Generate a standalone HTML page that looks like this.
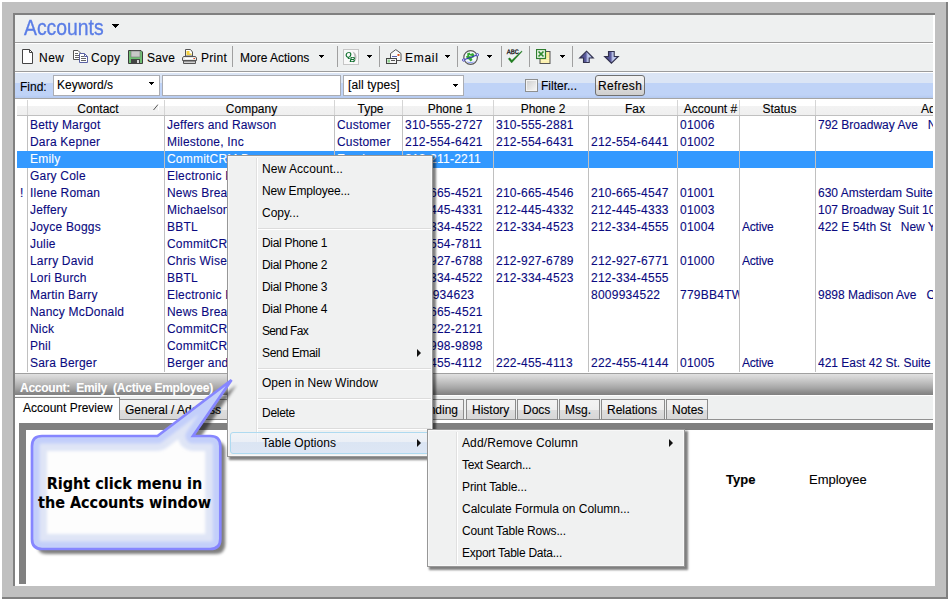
<!DOCTYPE html>
<html><head><meta charset="utf-8"><title>Accounts</title>
<style>
*{box-sizing:border-box;margin:0;padding:0}
html,body{width:948px;height:599px;overflow:hidden;background:#fff}
body{position:relative;font-family:"Liberation Sans",Arial,sans-serif;font-size:12px;color:#000}
.a,.a>*{position:absolute}
.frame{left:2px;top:2px;width:946px;height:597px;background:#c0c0c0;border-right:2px solid #808080;border-bottom:2px solid #808080}
.sunk{left:13px;top:13px;width:922px;height:573px;background:#fff;border-left:2px solid #808080;border-top:2px solid #808080}
.t{white-space:nowrap;line-height:14px;height:14px;-webkit-text-stroke:0.1px}
.ttl{left:24px;top:16px;font-size:22px;transform:scaleX(0.88);transform-origin:0 0;-webkit-text-stroke:0.35px #5a7de6;color:#5a7de6;line-height:24px;height:24px}
.dd{width:5px;height:3px}
.sep{width:1px;height:21px;top:46px;background:#a0a0a0}
.inp{top:75px;height:21px;background:#fff;border:1px solid #abadb3}
.nv{color:#0a0a80}
</style></head><body>
<div class="a frame"></div>
<div class="a sunk"></div>
<div class="a" id="main" style="left:0;top:0;width:933px;height:584px;overflow:hidden">
<div style="left:15px;top:15px;width:918px;height:27px;background:#eef0f0"></div>
<div class="t ttl">Accounts</div>
<svg class="dd" style="left:112px;top:24px;width:7px;height:4px" width="7" height="4" shape-rendering="crispEdges" fill="#000"><rect x="0" y="0" width="7" height="1"/><rect x="1" y="1" width="5" height="1"/><rect x="2" y="2" width="3" height="1"/><rect x="3" y="3" width="1" height="1"/></svg>
<div style="left:15px;top:42px;width:918px;height:1px;background:#9c9c9c"></div>
<div style="left:15px;top:44px;width:918px;height:27px;background:#eef0f0"></div>
<div style="left:15px;top:71px;width:918px;height:1px;background:#9c9c9c"></div>
<div class="t" style="left:39px;top:51px;letter-spacing:0.5px">New</div>
<div class="t" style="left:91px;top:51px;letter-spacing:0.3px">Copy</div>
<div class="t" style="left:147px;top:51px;letter-spacing:0.2px">Save</div>
<div class="t" style="left:201px;top:51px;letter-spacing:0.3px">Print</div>
<div class="t" style="left:240px;top:51px;letter-spacing:0px">More Actions</div>
<div class="t" style="left:405px;top:51px;letter-spacing:0.7px">Email</div>
<div class="sep" style="left:232px"></div>
<div class="sep" style="left:337px"></div>
<div class="sep" style="left:379px"></div>
<div class="sep" style="left:457px"></div>
<div class="sep" style="left:501px"></div>
<div class="sep" style="left:529px"></div>
<div class="sep" style="left:572px"></div>
<svg class="dd" style="left:319px;top:55px;width:5px;height:3px" width="5" height="3" shape-rendering="crispEdges" fill="#000"><rect x="0" y="0" width="5" height="1"/><rect x="1" y="1" width="3" height="1"/><rect x="2" y="2" width="1" height="1"/></svg>
<svg class="dd" style="left:367px;top:55px;width:5px;height:3px" width="5" height="3" shape-rendering="crispEdges" fill="#000"><rect x="0" y="0" width="5" height="1"/><rect x="1" y="1" width="3" height="1"/><rect x="2" y="2" width="1" height="1"/></svg>
<svg class="dd" style="left:445px;top:55px;width:5px;height:3px" width="5" height="3" shape-rendering="crispEdges" fill="#000"><rect x="0" y="0" width="5" height="1"/><rect x="1" y="1" width="3" height="1"/><rect x="2" y="2" width="1" height="1"/></svg>
<svg class="dd" style="left:487px;top:55px;width:5px;height:3px" width="5" height="3" shape-rendering="crispEdges" fill="#000"><rect x="0" y="0" width="5" height="1"/><rect x="1" y="1" width="3" height="1"/><rect x="2" y="2" width="1" height="1"/></svg>
<svg class="dd" style="left:560px;top:55px;width:5px;height:3px" width="5" height="3" shape-rendering="crispEdges" fill="#000"><rect x="0" y="0" width="5" height="1"/><rect x="1" y="1" width="3" height="1"/><rect x="2" y="2" width="1" height="1"/></svg>
<svg style="left:22px;top:49px" width="12" height="15" viewBox="0 0 12 15" ><path d="M0.5 0.5H7.5L10.5 3.5V14.5H0.5Z" fill="#fff" stroke="#444" stroke-width="1"/><path d="M7.5 0.5V3.5H10.5" fill="none" stroke="#444" stroke-width="1"/></svg>
<svg style="left:73px;top:50px" width="16" height="13" viewBox="0 0 16 13" ><path d="M0.5 0.5H5L7.5 3V9.5H0.5Z" fill="#fff" stroke="#555" stroke-width="1"/><path d="M2 3.5H5M2 5.5H6M2 7.5H6" stroke="#666" stroke-width="1"/><path d="M6.5 3.5H11.5L14.5 6.5V12.5H6.5Z" fill="#fff" stroke="#5a62a4" stroke-width="1"/><path d="M11.5 3.5V6.5H14.5" fill="none" stroke="#5a62a4" stroke-width="1"/><path d="M8 6.5H11M8 8.5H13M8 10.5H13" stroke="#666" stroke-width="1"/></svg>
<svg style="left:128px;top:50px" width="15" height="14" viewBox="0 0 15 14" ><path d="M0.5 0.5H13L14.5 2V13.5H0.5Z" fill="#6fbf73" stroke="#3c3c3c" stroke-width="1"/><rect x="3" y="1" width="9" height="6" fill="#c8c8c8" stroke="#777" stroke-width="0.6"/><rect x="3" y="9" width="9" height="5" fill="#444"/><rect x="9" y="10" width="2" height="3" fill="#d8d8d8"/></svg>
<svg style="left:182px;top:49px" width="15" height="15" viewBox="0 0 15 15" ><path d="M3.5 0.5H8.5L10.5 3V7H3.5Z" fill="#fff" stroke="#555" stroke-width="1"/><path d="M4.5 2H7.5V4.5H9.5V6H4.5Z" fill="#f2d040"/><path d="M1.5 7.5H13.5L14.5 9V11.5H0.5V9Z" fill="#e8e8e8" stroke="#555" stroke-width="1"/><path d="M3 9.5H11" stroke="#fff" stroke-width="1"/><rect x="11.5" y="9" width="1.5" height="1" fill="#e04a20"/><path d="M1.5 12H13.5V14.5H1.5Z" fill="#d0d0d0" stroke="#555" stroke-width="1"/></svg>
<svg style="left:343px;top:49px" width="16" height="16" viewBox="0 0 16 16" ><rect x="0.5" y="0.5" width="15" height="15" fill="#f9f9f9" stroke="#c6c6c6"/><path d="M9.5 2.5C14.5 4 15 11 10 14C11.5 11.5 12.5 6.5 9.5 2.5Z" fill="#b9b9b9"/><g style="opacity:.99"><text x="2.2" y="8.2" font-family="Liberation Sans,Arial,sans-serif" font-size="8" font-weight="bold" font-style="italic" fill="#0b6e2b">Q</text><text x="6.6" y="12.8" font-family="Liberation Sans,Arial,sans-serif" font-size="8" font-weight="bold" font-style="italic" fill="#0b6e2b">B</text></g></svg>
<svg style="left:386px;top:49px" width="16" height="15" viewBox="0 0 16 15" ><path d="M4.5 11.5V4.5L9.8 0.6L15 4.5V11.5Z" fill="#fbfbfb" stroke="#555" stroke-width="1"/><path d="M6 7.5H11" stroke="#5a62b0" stroke-width="1"/><rect x="11.5" y="5" width="2" height="2" fill="#e0581c"/><rect x="0.5" y="9.5" width="10" height="5" fill="#f4f4f4" stroke="#444" stroke-width="1"/><rect x="1.5" y="10.5" width="2.5" height="3" fill="#8fd08f"/><path d="M5 11.5H9" stroke="#555" stroke-width="1"/></svg>
<svg style="left:462px;top:50px" width="17" height="15" viewBox="0 0 17 15" ><circle cx="8.6" cy="7.5" r="6.8" fill="#f6fafc" stroke="#5a5a5a" stroke-width="1.2"/><path d="M5 3.5L7.5 2.5L8.5 4L11 3L12.5 5L11.5 7.5L9.5 8L10.5 10L8.5 11.5L7 9.5L5 9L4 6.5L5.5 5.5Z" fill="#36a836"/><path d="M7 5.5L10 6.5" stroke="#f6fafc" stroke-width="0.9"/><path d="M4 11.2C6.3 13.8 10.8 13.8 13.2 11.2C10.5 12.2 6.5 12.2 4 11.2Z" fill="#8e9ff0"/><path d="M2 9.8L15.2 5" stroke="#3838b4" stroke-width="1.1"/><circle cx="1.7" cy="10" r="1.2" fill="#fff" stroke="#3838b4" stroke-width="0.9"/><circle cx="15.4" cy="4.8" r="1.2" fill="#fff" stroke="#3838b4" stroke-width="0.9"/></svg>
<svg style="left:506px;top:48px" width="18" height="17" viewBox="0 0 18 17" ><text x="0.8" y="6.4" font-family="Liberation Mono,monospace" font-size="6.8" fill="#111" stroke="#111" stroke-width="0.25" letter-spacing="-0.1" text-rendering="geometricPrecision">ABC</text><path d="M2.2 10.8L5.6 15L16.2 3.6L15.6 3.1L5.8 12.2L3.8 9.8Z" fill="#1f7f1f" stroke="#176a17" stroke-width="0.3"/></svg>
<svg style="left:536px;top:49px" width="15" height="15" viewBox="0 0 15 15" ><rect x="4" y="2.5" width="10" height="12" fill="#fbeea0" stroke="#555" stroke-width="1"/><path d="M5 9.5H13M5 11.5H13M5 13H13" stroke="#fff6c8" stroke-width="0.8"/><rect x="0.5" y="0.5" width="9" height="9" fill="#e9f4e6" stroke="#2e7d2e" stroke-width="1.2"/><path d="M2.5 2.5L7.5 7.5M7.5 2.5L2.5 7.5" stroke="#2e8a2e" stroke-width="1.7"/></svg>
<svg style="left:578px;top:50px" width="17" height="14" viewBox="0 0 17 14" ><defs><linearGradient id="ag" x1="0" x2="1" y1="0" y2="0"><stop offset="0" stop-color="#40407c"/><stop offset=".45" stop-color="#5c5c9e"/><stop offset=".6" stop-color="#c4cef0"/><stop offset=".8" stop-color="#b4c0ea"/><stop offset="1" stop-color="#50508c"/></linearGradient></defs><path d="M8.5 1.2L15.3 8H11.2V12.5H5.5V8H1.7Z" fill="url(#ag)" stroke="#32324e" stroke-width="1.1" stroke-linejoin="miter"/></svg>
<svg style="left:603px;top:50px" width="17" height="14" viewBox="0 0 17 14" ><path d="M5.5 1.5H11.2V6.5H15.3L8.4 13.2L1.6 6.5H5.5Z" fill="url(#ag)" stroke="#32324e" stroke-width="1.1" stroke-linejoin="miter"/></svg>
<div style="left:15px;top:73px;width:918px;height:25px;background:linear-gradient(#dbe5f5 0,#dbe5f5 10px,#bfd3f7 10px,#bfd3f7 22px,#b4c9ef 25px)"></div>
<div style="left:15px;top:98px;width:918px;height:1px;background:#a5a5a5"></div>
<div class="t" style="left:20px;top:80px">Find:</div>
<div class="inp" style="left:53px;width:107px"></div><div class="t" style="left:57px;top:78px">Keyword/s</div><svg class="dd" style="left:149px;top:82px;width:5px;height:3px" width="5" height="3" shape-rendering="crispEdges" fill="#000"><rect x="0" y="0" width="5" height="1"/><rect x="1" y="1" width="3" height="1"/><rect x="2" y="2" width="1" height="1"/></svg>
<div class="inp" style="left:162px;width:179px"></div>
<div class="inp" style="left:343px;width:121px"></div><div class="t" style="left:348px;top:78px;letter-spacing:0.1px">[all types]</div><svg class="dd" style="left:453px;top:84px;width:5px;height:3px" width="5" height="3" shape-rendering="crispEdges" fill="#000"><rect x="0" y="0" width="5" height="1"/><rect x="1" y="1" width="3" height="1"/><rect x="2" y="2" width="1" height="1"/></svg>
<div style="left:525px;top:79px;width:13px;height:13px;border:1px solid #8e8f8f;box-shadow:inset 0 0 0 1px #f4f4f4;background:linear-gradient(135deg,#cdcdcd,#f8f8f8)"></div>
<div class="t" style="left:541px;top:79px">Filter...</div>
<div style="left:595px;top:75px;width:50px;height:21px;border:1px solid #707070;border-radius:3px;background:linear-gradient(#f2f2f2,#ebebeb 50%,#dddddd 50%,#cfcfcf)"></div>
<div class="t" style="left:598px;top:79px;letter-spacing:0.3px">Refresh</div>
<div style="left:17px;top:99px;width:916px;height:16px;background:linear-gradient(#fff 0,#fff 7px,#f3f3f3 7px,#efefef 16px)"></div>
<div style="left:17px;top:115px;width:916px;height:1px;background:#c0c0c0"></div>
<div style="left:27px;top:100px;width:1px;height:15px;background:#d5d5d5"></div>
<div style="left:164px;top:100px;width:1px;height:15px;background:#d5d5d5"></div>
<div style="left:334px;top:100px;width:1px;height:15px;background:#d5d5d5"></div>
<div style="left:402px;top:100px;width:1px;height:15px;background:#d5d5d5"></div>
<div style="left:493px;top:100px;width:1px;height:15px;background:#d5d5d5"></div>
<div style="left:588px;top:100px;width:1px;height:15px;background:#d5d5d5"></div>
<div style="left:677px;top:100px;width:1px;height:15px;background:#d5d5d5"></div>
<div style="left:739px;top:100px;width:1px;height:15px;background:#d5d5d5"></div>
<div style="left:815px;top:100px;width:1px;height:15px;background:#d5d5d5"></div>
<div style="left:27px;top:116px;width:1px;height:256px;background:#c0c0c0"></div>
<div style="left:164px;top:116px;width:1px;height:256px;background:#c0c0c0"></div>
<div style="left:334px;top:116px;width:1px;height:256px;background:#c0c0c0"></div>
<div style="left:402px;top:116px;width:1px;height:256px;background:#c0c0c0"></div>
<div style="left:493px;top:116px;width:1px;height:256px;background:#c0c0c0"></div>
<div style="left:588px;top:116px;width:1px;height:256px;background:#c0c0c0"></div>
<div style="left:677px;top:116px;width:1px;height:256px;background:#c0c0c0"></div>
<div style="left:739px;top:116px;width:1px;height:256px;background:#c0c0c0"></div>
<div style="left:815px;top:116px;width:1px;height:256px;background:#c0c0c0"></div>
<div class="t" style="left:29px;top:102px;width:138px;text-align:center">Contact</div>
<div class="t" style="left:166px;top:102px;width:171px;text-align:center">Company</div>
<div class="t" style="left:336px;top:102px;width:69px;text-align:center">Type</div>
<div class="t" style="left:404px;top:102px;width:92px;text-align:center">Phone 1</div>
<div class="t" style="left:495px;top:102px;width:96px;text-align:center">Phone 2</div>
<div class="t" style="left:590px;top:102px;width:90px;text-align:center">Fax</div>
<div class="t" style="left:679px;top:102px;width:63px;text-align:center">Account #</div>
<div class="t" style="left:741px;top:102px;width:77px;text-align:center">Status</div>
<div class="t" style="left:921px;top:102px">Address</div>
<svg style="left:152px;top:103px" width="8" height="8" viewBox="0 0 8 8"><path d="M1.5 7 L6 1.5" stroke="#555" stroke-width="1" fill="none"/><path d="M6.5 1.5V7.5" stroke="#fff" stroke-width="1"/></svg>
<div style="left:17px;top:151px;width:916px;height:17px;background:#3399ff"></div>
<div style="left:164px;top:151px;width:1px;height:17px;background:#c0c0c0"></div>
<div style="left:334px;top:151px;width:1px;height:17px;background:#c0c0c0"></div>
<div style="left:402px;top:151px;width:1px;height:17px;background:#c0c0c0"></div>
<div style="left:493px;top:151px;width:1px;height:17px;background:#c0c0c0"></div>
<div style="left:588px;top:151px;width:1px;height:17px;background:#c0c0c0"></div>
<div style="left:677px;top:151px;width:1px;height:17px;background:#c0c0c0"></div>
<div style="left:739px;top:151px;width:1px;height:17px;background:#c0c0c0"></div>
<div style="left:815px;top:151px;width:1px;height:17px;background:#c0c0c0"></div>
<div class="t nv" style="left:30px;top:118px;width:134px;overflow:hidden;letter-spacing:0.2px">Betty Margot</div>
<div class="t nv" style="left:167px;top:118px;width:167px;overflow:hidden;letter-spacing:0.2px">Jeffers and Rawson</div>
<div class="t nv" style="left:337px;top:118px;width:65px;overflow:hidden;letter-spacing:0.2px">Customer</div>
<div class="t nv" style="left:405px;top:118px;width:88px;overflow:hidden;letter-spacing:0.25px">310-555-2727</div>
<div class="t nv" style="left:496px;top:118px;width:92px;overflow:hidden;letter-spacing:0.25px">310-555-2881</div>
<div class="t nv" style="left:680px;top:118px;width:59px;overflow:hidden;letter-spacing:0.25px">01006</div>
<div class="t nv" style="left:818px;top:118px;width:115px;overflow:hidden">792 Broadway Ave &nbsp; New</div>
<div class="t nv" style="left:30px;top:135px;width:134px;overflow:hidden;letter-spacing:0.2px">Dara Kepner</div>
<div class="t nv" style="left:167px;top:135px;width:167px;overflow:hidden;letter-spacing:0.2px">Milestone, Inc</div>
<div class="t nv" style="left:337px;top:135px;width:65px;overflow:hidden;letter-spacing:0.2px">Customer</div>
<div class="t nv" style="left:405px;top:135px;width:88px;overflow:hidden;letter-spacing:0.25px">212-554-6421</div>
<div class="t nv" style="left:496px;top:135px;width:92px;overflow:hidden;letter-spacing:0.25px">212-554-6431</div>
<div class="t nv" style="left:591px;top:135px;width:86px;overflow:hidden;letter-spacing:0.25px">212-554-6441</div>
<div class="t nv" style="left:680px;top:135px;width:59px;overflow:hidden;letter-spacing:0.25px">01002</div>
<div class="t" style="left:30px;top:152px;width:134px;overflow:hidden;color:#fff;letter-spacing:0.2px">Emily</div>
<div class="t" style="left:167px;top:152px;width:167px;overflow:hidden;color:#fff;letter-spacing:0.2px">CommitCRM D</div>
<div class="t" style="left:337px;top:152px;width:65px;overflow:hidden;color:#fff;letter-spacing:0.2px">Employee</div>
<div class="t" style="left:405px;top:152px;width:88px;overflow:hidden;color:#fff;letter-spacing:0.25px">212-211-2211</div>
<div class="t nv" style="left:30px;top:169px;width:134px;overflow:hidden;letter-spacing:0.2px">Gary Cole</div>
<div class="t nv" style="left:167px;top:169px;width:167px;overflow:hidden;letter-spacing:0.2px">Electronic P</div>
<div class="t nv" style="left:30px;top:186px;width:134px;overflow:hidden;letter-spacing:0.2px">Ilene Roman</div>
<div class="t nv" style="left:167px;top:186px;width:167px;overflow:hidden;letter-spacing:0.2px">News Break</div>
<div class="t nv" style="left:405px;top:186px;width:88px;overflow:hidden;letter-spacing:0.25px">210-665-4521</div>
<div class="t nv" style="left:496px;top:186px;width:92px;overflow:hidden;letter-spacing:0.25px">210-665-4546</div>
<div class="t nv" style="left:591px;top:186px;width:86px;overflow:hidden;letter-spacing:0.25px">210-665-4547</div>
<div class="t nv" style="left:680px;top:186px;width:59px;overflow:hidden;letter-spacing:0.25px">01001</div>
<div class="t nv" style="left:818px;top:186px;width:115px;overflow:hidden">630 Amsterdam Suite 1</div>
<div class="t nv" style="left:30px;top:203px;width:134px;overflow:hidden;letter-spacing:0.2px">Jeffery</div>
<div class="t nv" style="left:167px;top:203px;width:167px;overflow:hidden;letter-spacing:0.2px">Michaelson</div>
<div class="t nv" style="left:405px;top:203px;width:88px;overflow:hidden;letter-spacing:0.25px">212-445-4331</div>
<div class="t nv" style="left:496px;top:203px;width:92px;overflow:hidden;letter-spacing:0.25px">212-445-4332</div>
<div class="t nv" style="left:591px;top:203px;width:86px;overflow:hidden;letter-spacing:0.25px">212-445-4333</div>
<div class="t nv" style="left:680px;top:203px;width:59px;overflow:hidden;letter-spacing:0.25px">01003</div>
<div class="t nv" style="left:818px;top:203px;width:115px;overflow:hidden">107 Broadway Suit 10</div>
<div class="t nv" style="left:30px;top:220px;width:134px;overflow:hidden;letter-spacing:0.2px">Joyce Boggs</div>
<div class="t nv" style="left:167px;top:220px;width:167px;overflow:hidden;letter-spacing:0.2px">BBTL</div>
<div class="t nv" style="left:405px;top:220px;width:88px;overflow:hidden;letter-spacing:0.25px">212-334-4522</div>
<div class="t nv" style="left:496px;top:220px;width:92px;overflow:hidden;letter-spacing:0.25px">212-334-4523</div>
<div class="t nv" style="left:591px;top:220px;width:86px;overflow:hidden;letter-spacing:0.25px">212-334-4555</div>
<div class="t nv" style="left:680px;top:220px;width:59px;overflow:hidden;letter-spacing:0.25px">01004</div>
<div class="t nv" style="left:742px;top:220px;width:73px;overflow:hidden;letter-spacing:-0.2px">Active</div>
<div class="t nv" style="left:818px;top:220px;width:115px;overflow:hidden">422 E 54th St &nbsp; New Y</div>
<div class="t nv" style="left:30px;top:237px;width:134px;overflow:hidden;letter-spacing:0.2px">Julie</div>
<div class="t nv" style="left:167px;top:237px;width:167px;overflow:hidden;letter-spacing:0.2px">CommitCRM</div>
<div class="t nv" style="left:405px;top:237px;width:88px;overflow:hidden;letter-spacing:0.25px">212-554-7811</div>
<div class="t nv" style="left:30px;top:254px;width:134px;overflow:hidden;letter-spacing:0.2px">Larry David</div>
<div class="t nv" style="left:167px;top:254px;width:167px;overflow:hidden;letter-spacing:0.2px">Chris Wise</div>
<div class="t nv" style="left:405px;top:254px;width:88px;overflow:hidden;letter-spacing:0.25px">212-927-6788</div>
<div class="t nv" style="left:496px;top:254px;width:92px;overflow:hidden;letter-spacing:0.25px">212-927-6789</div>
<div class="t nv" style="left:591px;top:254px;width:86px;overflow:hidden;letter-spacing:0.25px">212-927-6771</div>
<div class="t nv" style="left:680px;top:254px;width:59px;overflow:hidden;letter-spacing:0.25px">01000</div>
<div class="t nv" style="left:742px;top:254px;width:73px;overflow:hidden;letter-spacing:-0.2px">Active</div>
<div class="t nv" style="left:30px;top:271px;width:134px;overflow:hidden;letter-spacing:0.2px">Lori Burch</div>
<div class="t nv" style="left:167px;top:271px;width:167px;overflow:hidden;letter-spacing:0.2px">BBTL</div>
<div class="t nv" style="left:405px;top:271px;width:88px;overflow:hidden;letter-spacing:0.25px">212-334-4522</div>
<div class="t nv" style="left:496px;top:271px;width:92px;overflow:hidden;letter-spacing:0.25px">212-334-4523</div>
<div class="t nv" style="left:591px;top:271px;width:86px;overflow:hidden;letter-spacing:0.25px">212-334-4555</div>
<div class="t nv" style="left:30px;top:288px;width:134px;overflow:hidden;letter-spacing:0.2px">Martin Barry</div>
<div class="t nv" style="left:167px;top:288px;width:167px;overflow:hidden;letter-spacing:0.2px">Electronic P</div>
<div class="t nv" style="left:405px;top:288px;width:88px;overflow:hidden;letter-spacing:0.25px">8009934623</div>
<div class="t nv" style="left:591px;top:288px;width:86px;overflow:hidden;letter-spacing:0.25px">8009934522</div>
<div class="t nv" style="left:680px;top:288px;width:59px;overflow:hidden;letter-spacing:0.25px">779BB4TW</div>
<div class="t nv" style="left:818px;top:288px;width:115px;overflow:hidden">9898 Madison Ave &nbsp; Ch</div>
<div class="t nv" style="left:30px;top:305px;width:134px;overflow:hidden;letter-spacing:0.2px">Nancy McDonald</div>
<div class="t nv" style="left:167px;top:305px;width:167px;overflow:hidden;letter-spacing:0.2px">News Break</div>
<div class="t nv" style="left:405px;top:305px;width:88px;overflow:hidden;letter-spacing:0.25px">210-665-4521</div>
<div class="t nv" style="left:30px;top:322px;width:134px;overflow:hidden;letter-spacing:0.2px">Nick</div>
<div class="t nv" style="left:167px;top:322px;width:167px;overflow:hidden;letter-spacing:0.2px">CommitCRM</div>
<div class="t nv" style="left:405px;top:322px;width:88px;overflow:hidden;letter-spacing:0.25px">212-222-2121</div>
<div class="t nv" style="left:30px;top:339px;width:134px;overflow:hidden;letter-spacing:0.2px">Phil</div>
<div class="t nv" style="left:167px;top:339px;width:167px;overflow:hidden;letter-spacing:0.2px">CommitCRM</div>
<div class="t nv" style="left:405px;top:339px;width:88px;overflow:hidden;letter-spacing:0.25px">212-998-9898</div>
<div class="t nv" style="left:30px;top:356px;width:134px;overflow:hidden;letter-spacing:0.2px">Sara Berger</div>
<div class="t nv" style="left:167px;top:356px;width:167px;overflow:hidden;letter-spacing:0.2px">Berger and</div>
<div class="t nv" style="left:405px;top:356px;width:88px;overflow:hidden;letter-spacing:0.25px">222-455-4112</div>
<div class="t nv" style="left:496px;top:356px;width:92px;overflow:hidden;letter-spacing:0.25px">222-455-4113</div>
<div class="t nv" style="left:591px;top:356px;width:86px;overflow:hidden;letter-spacing:0.25px">222-455-4144</div>
<div class="t nv" style="left:680px;top:356px;width:59px;overflow:hidden;letter-spacing:0.25px">01005</div>
<div class="t nv" style="left:742px;top:356px;width:73px;overflow:hidden;letter-spacing:-0.2px">Active</div>
<div class="t nv" style="left:818px;top:356px;width:115px;overflow:hidden">421 East 42 St. Suite 6</div>
<div class="t nv" style="left:20px;top:186px">!</div>
<div style="left:15px;top:373px;width:918px;height:1px;background:#a0a0a0"></div>
<div style="left:15px;top:374px;width:918px;height:21px;background:linear-gradient(#e0e0e0 0,#d2d2d2 4px,#bcbcbc 9px,#a6a6a6 14px,#8e8e8e 18px,#808080 21px)"></div>
<div class="t" style="left:20px;top:381px;color:#fff;font-weight:bold;letter-spacing:-0.25px">Account:&nbsp; Emily&nbsp; (Active Employee)</div>
<div style="left:15px;top:396px;width:918px;height:24px;background:#eef0f0"></div>
<div style="left:15px;top:419px;width:918px;height:1px;background:#919191"></div>
<div style="left:119px;top:399px;width:110px;height:21px;border:1px solid #8c8c8c;background:linear-gradient(#f3f3f3 0,#efefef 10px,#dedede 10px,#d6d6d6 20px)"></div>
<div class="t" style="left:125px;top:403px">General / Address</div>
<div style="left:394px;top:399px;width:70px;height:21px;border:1px solid #8c8c8c;background:linear-gradient(#f3f3f3 0,#efefef 10px,#dedede 10px,#d6d6d6 20px)"></div>
<div class="t" style="left:394px;top:403px;width:64px;text-align:right">Pending</div>
<div style="left:466px;top:399px;width:50px;height:21px;border:1px solid #8c8c8c;background:linear-gradient(#f3f3f3 0,#efefef 10px,#dedede 10px,#d6d6d6 20px)"></div>
<div class="t" style="left:472px;top:403px">History</div>
<div style="left:517px;top:399px;width:41px;height:21px;border:1px solid #8c8c8c;background:linear-gradient(#f3f3f3 0,#efefef 10px,#dedede 10px,#d6d6d6 20px)"></div>
<div class="t" style="left:523px;top:403px">Docs</div>
<div style="left:559px;top:399px;width:41px;height:21px;border:1px solid #8c8c8c;background:linear-gradient(#f3f3f3 0,#efefef 10px,#dedede 10px,#d6d6d6 20px)"></div>
<div class="t" style="left:565px;top:403px">Msg.</div>
<div style="left:601px;top:399px;width:64px;height:21px;border:1px solid #8c8c8c;background:linear-gradient(#f3f3f3 0,#efefef 10px,#dedede 10px,#d6d6d6 20px)"></div>
<div class="t" style="left:607px;top:403px">Relations</div>
<div style="left:666px;top:399px;width:42px;height:21px;border:1px solid #8c8c8c;background:linear-gradient(#f3f3f3 0,#efefef 10px,#dedede 10px,#d6d6d6 20px)"></div>
<div class="t" style="left:672px;top:403px">Notes</div>
<div style="left:15px;top:397px;width:105px;height:23px;border:1px solid #8c8c8c;border-left:none;border-bottom:none;background:#fff"></div>
<div class="t" style="left:23px;top:401px">Account Preview</div>
<div style="left:15px;top:420px;width:918px;height:164px;background:#fff"></div>
<div style="left:19px;top:423px;width:914px;height:7px;background:#808080"></div>
<div style="left:19px;top:423px;width:7px;height:161px;background:#808080"></div>
<div class="t" style="left:726px;top:473px;font-weight:bold;font-size:13px">Type</div>
<div class="t" style="left:809px;top:473px;font-size:13px">Employee</div>
</div>
<div class="a" id="over" style="left:0;top:0;width:948px;height:599px">
<div style="left:227px;top:155px;width:206px;height:302px;background:#f0f1f1;border:1px solid #979797;box-shadow:inset 0 0 0 1px #f8f8f8,2px 2px 2px 0.5px rgba(0,0,0,.5)"></div>
<div style="left:256px;top:158px;width:1px;height:296px;background:#e0e0e0"></div>
<div style="left:257px;top:158px;width:1px;height:296px;background:#fff"></div>
<div class="t" style="left:262px;top:162px;-webkit-text-stroke:0;letter-spacing:0.07px">New Account...</div>
<div class="t" style="left:262px;top:184px;-webkit-text-stroke:0;letter-spacing:-0.18px">New Employee...</div>
<div class="t" style="left:262px;top:206px;-webkit-text-stroke:0">Copy...</div>
<div style="left:258px;top:228px;width:173px;height:1px;background:#dcdcdc"></div>
<div style="left:258px;top:229px;width:173px;height:1px;background:#fff"></div>
<div class="t" style="left:262px;top:236px;-webkit-text-stroke:0;letter-spacing:-0.31px">Dial Phone 1</div>
<div class="t" style="left:262px;top:258px;-webkit-text-stroke:0;letter-spacing:-0.31px">Dial Phone 2</div>
<div class="t" style="left:262px;top:280px;-webkit-text-stroke:0;letter-spacing:-0.31px">Dial Phone 3</div>
<div class="t" style="left:262px;top:302px;-webkit-text-stroke:0;letter-spacing:-0.31px">Dial Phone 4</div>
<div class="t" style="left:262px;top:324px;-webkit-text-stroke:0;letter-spacing:-0.67px">Send Fax</div>
<div class="t" style="left:262px;top:346px;-webkit-text-stroke:0;letter-spacing:-0.34px">Send Email</div>
<div style="left:417px;top:349px;width:0;height:0;border-top:4px solid transparent;border-bottom:4px solid transparent;border-left:4px solid #111"></div>
<div style="left:258px;top:368px;width:173px;height:1px;background:#dcdcdc"></div>
<div style="left:258px;top:369px;width:173px;height:1px;background:#fff"></div>
<div class="t" style="left:262px;top:376px;-webkit-text-stroke:0;letter-spacing:0.03px">Open in New Window</div>
<div style="left:258px;top:398px;width:173px;height:1px;background:#dcdcdc"></div>
<div style="left:258px;top:399px;width:173px;height:1px;background:#fff"></div>
<div class="t" style="left:262px;top:406px;-webkit-text-stroke:0;letter-spacing:-0.28px">Delete</div>
<div style="left:258px;top:428px;width:173px;height:1px;background:#dcdcdc"></div>
<div style="left:258px;top:429px;width:173px;height:1px;background:#fff"></div>
<div style="left:230px;top:432px;width:200px;height:22px;border:1px solid #aedaf0;border-radius:3px;background:linear-gradient(rgba(240,244,250,.6) 0,rgba(232,238,248,.7) 9px,#dbe5f3 9px,#dde6f4 20px)"></div>
<div class="t" style="left:262px;top:436px;-webkit-text-stroke:0;letter-spacing:0.05px">Table Options</div>
<div style="left:417px;top:439px;width:0;height:0;border-top:4px solid transparent;border-bottom:4px solid transparent;border-left:4px solid #111"></div>
<div style="left:427px;top:429px;width:258px;height:138px;background:#f0f1f1;border:1px solid #979797;box-shadow:inset 0 0 0 1px #f8f8f8,2px 2px 2px 0.5px rgba(0,0,0,.5)"></div>
<div style="left:456px;top:432px;width:1px;height:132px;background:#e0e0e0"></div>
<div style="left:457px;top:432px;width:1px;height:132px;background:#fff"></div>
<div class="t" style="left:462px;top:436px;-webkit-text-stroke:0;letter-spacing:0.11px">Add/Remove Column</div>
<div style="left:669px;top:439px;width:0;height:0;border-top:4px solid transparent;border-bottom:4px solid transparent;border-left:4px solid #111"></div>
<div class="t" style="left:462px;top:458px;-webkit-text-stroke:0;letter-spacing:-0.31px">Text Search...</div>
<div class="t" style="left:462px;top:480px;-webkit-text-stroke:0;letter-spacing:-0.11px">Print Table...</div>
<div class="t" style="left:462px;top:502px;-webkit-text-stroke:0;letter-spacing:-0.03px">Calculate Formula on Column...</div>
<div class="t" style="left:462px;top:524px;-webkit-text-stroke:0;letter-spacing:-0.17px">Count Table Rows...</div>
<div class="t" style="left:462px;top:546px;-webkit-text-stroke:0;letter-spacing:-0.26px">Export Table Data...</div>
<svg style="left:0;top:370px" width="260" height="200" viewBox="0 370 260 200">
<defs>
<filter id="cb1" x="-10%" y="-10%" width="120%" height="120%"><feGaussianBlur stdDeviation="1.6"/></filter>
<filter id="cb2" x="-10%" y="-10%" width="120%" height="120%"><feGaussianBlur stdDeviation="3.2"/></filter>
<clipPath id="cc"><path d="M42 436 L157.5 436 L231.5 380 L193 436 L210.3 436 Q220.3 436 220.3 446 L220.3 539 Q220.3 549 210.3 549 L42 549 Q32 549 32 539 L32 446 Q32 436 42 436 Z"/></clipPath>
</defs>
<path d="M42 436 L157.5 436 L231.5 380 L193 436 L210.3 436 Q220.3 436 220.3 446 L220.3 539 Q220.3 549 210.3 549 L42 549 Q32 549 32 539 L32 446 Q32 436 42 436 Z" transform="translate(5 5)" fill="#000" opacity=".5" filter="url(#cb1)"/>
<path d="M42 436 L157.5 436 L231.5 380 L193 436 L210.3 436 Q220.3 436 220.3 446 L220.3 539 Q220.3 549 210.3 549 L42 549 Q32 549 32 539 L32 446 Q32 436 42 436 Z" fill="#fdfdfd"/>
<g clip-path="url(#cc)"><path d="M42 436 L157.5 436 L231.5 380 L193 436 L210.3 436 Q220.3 436 220.3 446 L220.3 539 Q220.3 549 210.3 549 L42 549 Q32 549 32 539 L32 446 Q32 436 42 436 Z" fill="none" stroke="#dfe5f6" stroke-width="30" stroke-linejoin="round" filter="url(#cb1)"/>
<path d="M42 436 L157.5 436 L231.5 380 L193 436 L210.3 436 Q220.3 436 220.3 446 L220.3 539 Q220.3 549 210.3 549 L42 549 Q32 549 32 539 L32 446 Q32 436 42 436 Z" fill="none" stroke="#c3cffa" stroke-width="15" stroke-linejoin="round" filter="url(#cb1)"/></g>
<path d="M42 436 L157.5 436 L231.5 380 L193 436 L210.3 436 Q220.3 436 220.3 446 L220.3 539 Q220.3 549 210.3 549 L42 549 Q32 549 32 539 L32 446 Q32 436 42 436 Z" fill="none" stroke="#8686ff" stroke-width="2.7" stroke-linejoin="miter"/>
</svg><div class="t" style="left:29.5px;top:474px;width:190px;text-align:center;font-family:'DejaVu Sans Condensed','DejaVu Sans',sans-serif;font-weight:bold;font-size:16px;line-height:19px;height:40px;white-space:normal">Right click menu in<br>the Accounts window</div>
</div>
</body></html>
